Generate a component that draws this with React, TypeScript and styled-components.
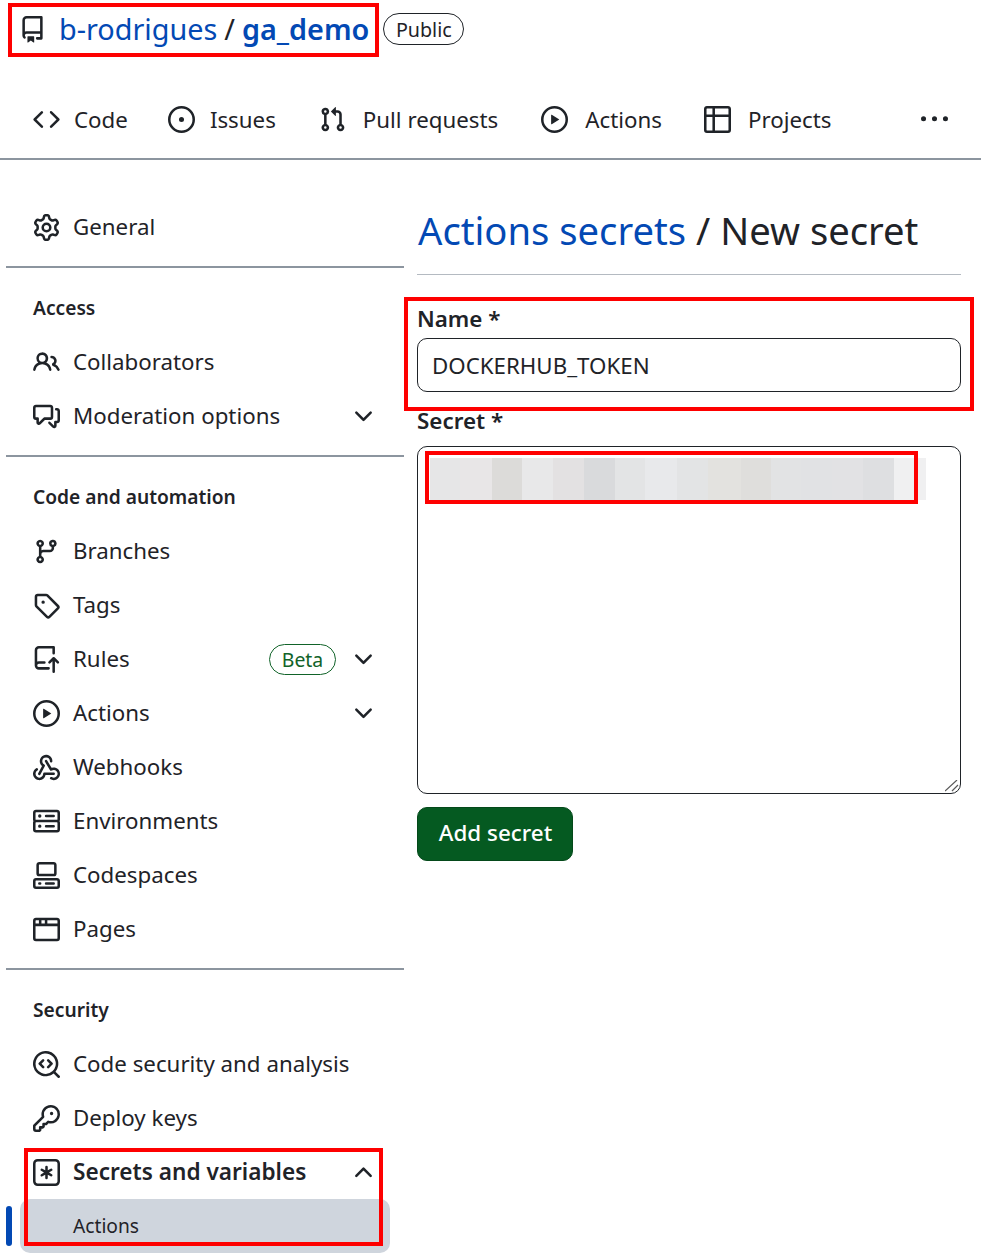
import { ReactNode } from 'react';
import styled, { createGlobalStyle } from 'styled-components';

const GlobalStyle = createGlobalStyle`
  html, body {
    margin: 0;
    background: #fff;
    color: #1f2328;
    font-family: "Noto Sans", "Liberation Sans", sans-serif;
  }
`;

const Page = styled.div`
  position: relative;
  width: 981px;
  height: 1257px;
  overflow: hidden;
`;

// red annotation rectangles drawn on top of the screenshot
const Mark = styled.div<{ $left: number; $top: number; $width: number; $height: number }>`
  position: absolute;
  left: ${(p) => p.$left}px;
  top: ${(p) => p.$top}px;
  width: ${(p) => p.$width}px;
  height: ${(p) => p.$height}px;
  box-sizing: border-box;
  border: 4px solid #fe0000;
  pointer-events: none;
`;

const TitleRow = styled.div`
  display: flex;
  align-items: center;
  height: 58px;
  padding-left: 19px;
  font-size: 28.8px;
  svg {
    flex: none;
  }
`;

const RepoPath = styled.div`
  margin: 0 0 2px 13px;
  white-space: nowrap;
  word-spacing: -0.5px;
`;

const RepoLink = styled.a<{ $bold?: boolean }>`
  color: #0349b4;
  font-weight: ${(p) => (p.$bold ? 600 : 400)};
`;

const Pill = styled.span`
  display: inline-flex;
  align-items: center;
  justify-content: center;
  box-sizing: border-box;
  border: 1px solid #1f2328;
  border-radius: 20px;
  height: 32px;
  width: 81px;
  margin-left: 14px;
  font-size: 19.7px;
`;

const Nav = styled.nav`
  display: flex;
  align-items: center;
  box-sizing: border-box;
  height: 102px;
  padding: 23px 33px 0;
  border-bottom: 2px solid #8c959f;
`;

const NavItem = styled.a<{ $gap: number; $iconGap: number }>`
  display: flex;
  align-items: center;
  gap: ${(p) => p.$iconGap}px;
  margin-right: ${(p) => p.$gap}px;
  font-size: 22.3px;
  line-height: 34px;
`;

const More = styled.span`
  display: flex;
  margin-left: auto;
`;

const Layout = styled.div`
  display: grid;
  grid-template-columns: 398px 544px;
  column-gap: 13px;
  padding-left: 6px;
`;

const Sidebar = styled.aside`
  padding-top: 40px;
`;

const Divider = styled.hr`
  height: 2px;
  margin: 12px 0 0;
  border: 0;
  background: #8c959f;
`;

const GroupHeading = styled.h3`
  margin: 0;
  padding: 23px 27px 10px;
  font-size: 19.2px;
  line-height: 34px;
  font-weight: 600;
`;

const SideRow = styled.a<{ $active?: boolean }>`
  display: flex;
  align-items: center;
  gap: 13px;
  height: 54px;
  padding: 0 27px;
  font-size: ${(p) => (p.$active ? 22.6 : 22.3)}px;
  font-weight: ${(p) => (p.$active ? 600 : 400)};
  white-space: nowrap;
`;

const RowLabel = styled.span`
  margin-bottom: 2px;
`;

const RowTail = styled.span`
  display: flex;
  align-items: center;
  margin-left: auto;
  gap: 14px;
`;

const BetaBadge = styled.span`
  display: inline-flex;
  align-items: center;
  justify-content: center;
  box-sizing: border-box;
  width: 67px;
  height: 31px;
  border: 1px solid #116329;
  border-radius: 20px;
  color: #116329;
  font-size: 19.4px;
`;

const SubRow = styled.div`
  position: relative;
  display: flex;
  align-items: center;
  box-sizing: border-box;
  height: 54px;
  margin: 0 14px 0 14px;
  padding: 0 0 2px 53px;
  border-radius: 10px;
  background: #cfd5dd;
  font-size: 19.2px;
  &::before {
    content: '';
    position: absolute;
    left: -14px;
    top: 7px;
    width: 6px;
    height: 40px;
    border-radius: 4px;
    background: #0349b4;
  }
`;

const Main = styled.main`
  padding-top: 28px;
`;

const Heading = styled.h1`
  margin: 0;
  height: 87px;
  box-sizing: border-box;
  padding-left: 1px;
  border-bottom: 1px solid #b4bac1;
  font-size: 38.2px;
  line-height: 84px;
  font-weight: 400;
  white-space: nowrap;
`;

const HeadingLink = styled.a`
  color: #0349b4;
`;

const Label = styled.label<{ $top: number }>`
  display: block;
  margin-top: ${(p) => p.$top}px;
  font-size: 22.4px;
  line-height: 34px;
  font-weight: 600;
`;

const NameInput = styled.input`
  display: block;
  box-sizing: border-box;
  width: 100%;
  height: 54px;
  margin-top: 2px;
  padding: 0 14px;
  border: 1px solid #1f2328;
  border-radius: 10px;
  background: #fff;
  color: #1f2328;
  font: 22.3px "Noto Sans", sans-serif;
  outline: none;
`;

const SecretBox = styled.div`
  position: relative;
  margin-top: 8px;
`;

const SecretArea = styled.textarea`
  display: block;
  box-sizing: border-box;
  width: 100%;
  height: 348px;
  padding: 10px 14px;
  border: 1px solid #1f2328;
  border-radius: 10px;
  background: #fff;
  font: 22.3px "Noto Sans", sans-serif;
  outline: none;
  resize: none;
`;

const BlurStrip = styled.div`
  position: absolute;
  left: 13px;
  top: 12px;
  width: 496px;
  height: 42px;
  display: flex;
`;

const BlurCell = styled.span<{ $grow: number; $color: string }>`
  flex: ${(p) => p.$grow} 0 0;
  background: ${(p) => p.$color};
`;

const Grip = styled.svg`
  position: absolute;
  right: 2px;
  bottom: 2px;
`;

const SubmitButton = styled.button`
  display: flex;
  align-items: center;
  justify-content: center;
  box-sizing: border-box;
  width: 156px;
  height: 54px;
  margin-top: 13px;
  padding: 0 0 3px 1px;
  border: 1px solid #04491a;
  border-radius: 10px;
  background: #055a21;
  color: #fff;
  font: 500 22.4px "Noto Sans", sans-serif;
`;

const ICON = 27;

// octicons, 16px grid: the reference shows these rather than the 24px set
const paths = {
  repo: 'M2 2.5A2.5 2.5 0 0 1 4.5 0h8.75a.75.75 0 0 1 .75.75v12.5a.75.75 0 0 1-.75.75h-2.5a.75.75 0 0 1 0-1.5h1.75v-2h-8a1 1 0 0 0-.714 1.7.75.75 0 1 1-1.072 1.05A2.495 2.495 0 0 1 2 11.5Zm10.5-1h-8a1 1 0 0 0-1 1v6.708A2.486 2.486 0 0 1 4.5 9h8ZM5 12.25a.25.25 0 0 1 .25-.25h3.5a.25.25 0 0 1 .25.25v3.25a.25.25 0 0 1-.4.2l-1.45-1.087a.249.249 0 0 0-.3 0L5.4 15.7a.25.25 0 0 1-.4-.2Z',
  code: 'm11.28 3.22 4.25 4.25a.75.75 0 0 1 0 1.06l-4.25 4.25a.749.749 0 0 1-1.275-.326.749.749 0 0 1 .215-.734L13.94 8l-3.72-3.72a.749.749 0 0 1 .326-1.275.749.749 0 0 1 .734.215Zm-6.56 0a.751.751 0 0 1 1.042.018.751.751 0 0 1 .018 1.042L2.06 8l3.72 3.72a.749.749 0 0 1-.326 1.275.749.749 0 0 1-.734-.215L.47 8.53a.75.75 0 0 1 0-1.06Z',
  issue: 'M8 9.5a1.5 1.5 0 1 0 0-3 1.5 1.5 0 0 0 0 3ZM8 0a8 8 0 1 1 0 16A8 8 0 0 1 8 0ZM1.5 8a6.5 6.5 0 1 0 13 0 6.5 6.5 0 0 0-13 0Z',
  pull: 'M1.5 3.25a2.25 2.25 0 1 1 3 2.122v5.256a2.251 2.251 0 1 1-1.5 0V5.372A2.25 2.25 0 0 1 1.5 3.25Zm5.677-.177L9.573.677A.25.25 0 0 1 10 .854V2.5h1A2.5 2.5 0 0 1 13.5 5v5.628a2.251 2.251 0 1 1-1.5 0V5a1 1 0 0 0-1-1h-1v1.646a.25.25 0 0 1-.427.177L7.177 3.427a.25.25 0 0 1 0-.354ZM3.75 2.5a.75.75 0 1 0 0 1.5.75.75 0 0 0 0-1.5Zm0 9.5a.75.75 0 1 0 0 1.5.75.75 0 0 0 0-1.5Zm8.25.75a.75.75 0 1 0 1.5 0 .75.75 0 0 0-1.5 0Z',
  play: 'M8 0a8 8 0 1 1 0 16A8 8 0 0 1 8 0ZM1.5 8a6.5 6.5 0 1 0 13 0 6.5 6.5 0 0 0-13 0Zm4.879-2.773 4.264 2.559a.25.25 0 0 1 0 .428l-4.264 2.559A.25.25 0 0 1 6 10.559V5.442a.25.25 0 0 1 .379-.215Z',
  table: 'M0 1.75C0 .784.784 0 1.75 0h12.5C15.216 0 16 .784 16 1.75v12.5A1.75 1.75 0 0 1 14.25 16H1.75A1.75 1.75 0 0 1 0 14.25ZM6.5 6.5v8h7.75a.25.25 0 0 0 .25-.25V6.5Zm8-1.5V1.75a.25.25 0 0 0-.25-.25H6.5V5Zm-13 1.5v7.75c0 .138.112.25.25.25H5v-8ZM5 5V1.5H1.75a.25.25 0 0 0-.25.25V5Z',
  kebab: 'M8 9a1.5 1.5 0 1 0 0-3 1.5 1.5 0 0 0 0 3ZM1.5 9a1.5 1.5 0 1 0 0-3 1.5 1.5 0 0 0 0 3Zm13 0a1.5 1.5 0 1 0 0-3 1.5 1.5 0 0 0 0 3Z',
  gear: 'M8 0a8.2 8.2 0 0 1 .701.031C9.444.095 9.99.645 10.16 1.29l.288 1.107c.018.066.079.158.212.224.231.114.454.243.668.386.123.082.233.09.299.071l1.103-.303c.644-.176 1.392.021 1.82.63.27.385.506.792.704 1.218.315.675.111 1.422-.364 1.891l-.814.806c-.049.048-.098.147-.088.294.016.257.016.515 0 .772-.01.147.038.246.088.294l.814.806c.475.469.679 1.216.364 1.891a7.977 7.977 0 0 1-.704 1.217c-.428.61-1.176.807-1.82.63l-1.102-.302c-.067-.019-.177-.011-.3.071a5.909 5.909 0 0 1-.668.386c-.133.066-.194.158-.211.224l-.29 1.106c-.168.646-.715 1.196-1.458 1.26a8.006 8.006 0 0 1-1.402 0c-.743-.064-1.289-.614-1.458-1.26l-.289-1.106c-.018-.066-.079-.158-.212-.224a5.738 5.738 0 0 1-.668-.386c-.123-.082-.233-.09-.299-.071l-1.103.303c-.644.176-1.392-.021-1.82-.63a8.12 8.12 0 0 1-.704-1.218c-.315-.675-.111-1.422.363-1.891l.815-.806c.05-.048.098-.147.088-.294a6.214 6.214 0 0 1 0-.772c.01-.147-.038-.246-.088-.294l-.815-.806C.635 6.045.431 5.298.746 4.623a7.92 7.92 0 0 1 .704-1.217c.428-.61 1.176-.807 1.82-.63l1.102.302c.067.019.177.011.3-.071.214-.143.437-.272.668-.386.133-.066.194-.158.211-.224l.29-1.106C6.009.645 6.556.095 7.299.03 7.53.01 7.764 0 8 0Zm-.571 1.525c-.036.003-.108.036-.137.146l-.289 1.105c-.147.561-.549.967-.998 1.189-.173.086-.34.183-.5.29-.417.278-.97.423-1.529.27l-1.103-.303c-.109-.03-.175.016-.195.045-.22.312-.412.644-.573.99-.014.031-.021.11.059.19l.815.806c.411.406.562.957.53 1.456a4.709 4.709 0 0 0 0 .582c.032.499-.119 1.05-.53 1.456l-.815.806c-.081.08-.073.159-.059.19.162.346.353.677.573.989.02.03.085.076.195.046l1.102-.303c.56-.153 1.113-.008 1.53.27.161.107.328.204.501.29.447.222.85.629.997 1.189l.289 1.105c.029.109.101.143.137.146a6.6 6.6 0 0 0 1.142 0c.036-.003.108-.036.137-.146l.289-1.105c.147-.561.549-.967.998-1.189.173-.086.34-.183.5-.29.417-.278.97-.423 1.529-.27l1.103.303c.109.029.175-.016.195-.045.22-.313.411-.644.573-.99.014-.031.021-.11-.059-.19l-.815-.806c-.411-.406-.562-.957-.53-1.456a4.709 4.709 0 0 0 0-.582c-.032-.499.119-1.05.53-1.456l.815-.806c.081-.08.073-.159.059-.19a6.464 6.464 0 0 0-.573-.989c-.02-.03-.085-.076-.195-.046l-1.102.303c-.56.153-1.113.008-1.53-.27a4.44 4.44 0 0 0-.501-.29c-.447-.222-.85-.629-.997-1.189l-.289-1.105c-.029-.11-.101-.143-.137-.146a6.6 6.6 0 0 0-1.142 0ZM11 8a3 3 0 1 1-6 0 3 3 0 0 1 6 0ZM9.5 8a1.5 1.5 0 1 0-3.001.001A1.5 1.5 0 0 0 9.5 8Z',
  people: 'M2 5.5a3.5 3.5 0 1 1 5.898 2.549 5.508 5.508 0 0 1 3.034 4.084.75.75 0 1 1-1.482.235 4 4 0 0 0-7.9 0 .75.75 0 0 1-1.482-.236A5.507 5.507 0 0 1 3.102 8.05 3.493 3.493 0 0 1 2 5.5ZM11 4a3.001 3.001 0 0 1 2.22 5.018 5.01 5.01 0 0 1 2.56 3.012.749.749 0 0 1-.885.954.752.752 0 0 1-.549-.514 3.507 3.507 0 0 0-2.522-2.372.75.75 0 0 1-.574-.73v-.352a.75.75 0 0 1 .416-.672A1.5 1.5 0 0 0 11 5.5.75.75 0 0 1 11 4Zm-5.5-.5a2 2 0 1 0-.001 3.999A2 2 0 0 0 5.5 3.5Z',
  discussion: 'M1.75 1h8.5c.966 0 1.75.784 1.75 1.75v5.5A1.75 1.75 0 0 1 10.25 10H7.061l-2.574 2.573A1.458 1.458 0 0 1 2 11.543V10h-.25A1.75 1.75 0 0 1 0 8.25v-5.5C0 1.784.784 1 1.75 1ZM1.5 2.75v5.5c0 .138.112.25.25.25h1a.75.75 0 0 1 .75.75v2.19l2.72-2.72a.749.749 0 0 1 .53-.22h3.5a.25.25 0 0 0 .25-.25v-5.5a.25.25 0 0 0-.25-.25h-8.5a.25.25 0 0 0-.25.25Zm13 2a.25.25 0 0 0-.25-.25h-.5a.75.75 0 0 1 0-1.5h.5c.966 0 1.75.784 1.75 1.75v5.5A1.75 1.75 0 0 1 14.25 12H14v1.543a1.458 1.458 0 0 1-2.487 1.03L9.22 12.28a.749.749 0 0 1 .326-1.275.749.749 0 0 1 .734.215l2.22 2.22v-2.19a.75.75 0 0 1 .75-.75h1a.25.25 0 0 0 .25-.25Z',
  branch: 'M9.5 3.25a2.25 2.25 0 1 1 3 2.122V6A2.5 2.5 0 0 1 10 8.5H6a1 1 0 0 0-1 1v1.128a2.251 2.251 0 1 1-1.5 0V5.372a2.25 2.25 0 1 1 1.5 0v1.836A2.493 2.493 0 0 1 6 7h4a1 1 0 0 0 1-1v-.628A2.25 2.25 0 0 1 9.5 3.25Zm-6 0a.75.75 0 1 0 1.5 0 .75.75 0 0 0-1.5 0Zm8.25-.75a.75.75 0 1 0 0 1.5.75.75 0 0 0 0-1.5ZM4.25 12a.75.75 0 1 0 0 1.5.75.75 0 0 0 0-1.5Z',
  tag: 'M1 7.775V2.75C1 1.784 1.784 1 2.75 1h5.025c.464 0 .91.184 1.238.513l6.25 6.25a1.75 1.75 0 0 1 0 2.474l-5.026 5.026a1.75 1.75 0 0 1-2.474 0l-6.25-6.25A1.752 1.752 0 0 1 1 7.775Zm1.5 0c0 .066.026.13.073.177l6.25 6.25a.25.25 0 0 0 .354 0l5.025-5.025a.25.25 0 0 0 0-.354l-6.25-6.25a.25.25 0 0 0-.177-.073H2.75a.25.25 0 0 0-.25.25ZM6 5a1 1 0 1 1 0 2 1 1 0 0 1 0-2Z',
  repoPush: 'M1 2.5A2.5 2.5 0 0 1 3.5 0h8.75a.75.75 0 0 1 .75.75v3.5a.75.75 0 0 1-1.5 0V1.5h-8a1 1 0 0 0-1 1v6.708A2.492 2.492 0 0 1 3.5 9h3.25a.75.75 0 0 1 0 1.5H3.5a1 1 0 0 0 0 2h5.75a.75.75 0 0 1 0 1.5H3.5A2.5 2.5 0 0 1 1 11.5Zm13.23 7.79h-.001l-1.224-1.224v6.184a.75.75 0 0 1-1.5 0V9.066L10.28 10.29a.75.75 0 0 1-1.06-1.061l2.505-2.504a.75.75 0 0 1 1.06 0L15.29 9.23a.751.751 0 0 1-.018 1.042.751.751 0 0 1-1.042.018Z',
  webhook: 'M5.5 4.25a2.25 2.25 0 0 1 4.5 0 .75.75 0 0 0 1.5 0 3.75 3.75 0 1 0-6.14 2.889l-2.272 4.258a.75.75 0 0 0 1.324.706L7 7.25a.75.75 0 0 0-.309-1.015A2.25 2.25 0 0 1 5.5 4.25ZM7.364 3.607a.75.75 0 0 1 1.03.257l2.608 4.349a3.75 3.75 0 1 1-.628 6.785.75.75 0 0 1 .752-1.299 2.25 2.25 0 1 0-.033-3.88.75.75 0 0 1-1.03-.256L7.107 4.636a.75.75 0 0 1 .257-1.03ZM2.9 8.776A.75.75 0 0 1 2.625 9.8 2.25 2.25 0 1 0 6 11.75a.75.75 0 0 1 .75-.751h5.5a.75.75 0 0 1 0 1.5H7.425a3.751 3.751 0 1 1-5.55-3.998.75.75 0 0 1 1.024.274Z',
  server: 'M1.75 1h12.5c.966 0 1.75.784 1.75 1.75v4c0 .372-.116.717-.314 1 .198.283.314.628.314 1v4a1.75 1.75 0 0 1-1.75 1.75H1.75A1.75 1.75 0 0 1 0 12.75v-4c0-.358.109-.707.314-1a1.739 1.739 0 0 1-.314-1v-4C0 1.784.784 1 1.75 1ZM1.5 2.75v4c0 .138.112.25.25.25h12.5a.25.25 0 0 0 .25-.25v-4a.25.25 0 0 0-.25-.25H1.75a.25.25 0 0 0-.25.25Zm.25 5.75a.25.25 0 0 0-.25.25v4c0 .138.112.25.25.25h12.5a.25.25 0 0 0 .25-.25v-4a.25.25 0 0 0-.25-.25ZM7 4.75A.75.75 0 0 1 7.75 4h4.5a.75.75 0 0 1 0 1.5h-4.5A.75.75 0 0 1 7 4.75ZM7.75 10h4.5a.75.75 0 0 1 0 1.5h-4.5a.75.75 0 0 1 0-1.5ZM3 4.75a1 1 0 1 1 2 0 1 1 0 0 1-2 0Zm1 5a1 1 0 1 1 0 2 1 1 0 0 1 0-2Z',
  codespaces: 'M0 11.25c0-.966.784-1.75 1.75-1.75h12.5c.966 0 1.75.784 1.75 1.75v3A1.75 1.75 0 0 1 14.25 16H1.75A1.75 1.75 0 0 1 0 14.25Zm2-9.5C2 .784 2.784 0 3.75 0h8.5C13.216 0 14 .784 14 1.75v5a1.75 1.75 0 0 1-1.75 1.75h-8.5A1.75 1.75 0 0 1 2 6.75Zm1.75-.25a.25.25 0 0 0-.25.25v5c0 .138.112.25.25.25h8.5a.25.25 0 0 0 .25-.25v-5a.25.25 0 0 0-.25-.25Zm-2 9.5a.25.25 0 0 0-.25.25v3c0 .138.112.25.25.25h12.5a.25.25 0 0 0 .25-.25v-3a.25.25 0 0 0-.25-.25ZM7 12.75a.75.75 0 0 1 .75-.75h4.5a.75.75 0 0 1 0 1.5h-4.5a.75.75 0 0 1-.75-.75Zm-4 0a.75.75 0 0 1 .75-.75h.5a.75.75 0 0 1 0 1.5h-.5a.75.75 0 0 1-.75-.75Z',
  browser: 'M0 2.75C0 1.784.784 1 1.75 1h12.5c.966 0 1.75.784 1.75 1.75v10.5A1.75 1.75 0 0 1 14.25 15H1.75A1.75 1.75 0 0 1 0 13.25ZM14.5 6h-13v7.25c0 .138.112.25.25.25h12.5a.25.25 0 0 0 .25-.25Zm-6-3.5v2h6V2.75a.25.25 0 0 0-.25-.25ZM5 2.5v2h2v-2Zm-3.25 0a.25.25 0 0 0-.25.25V4.5h2v-2Z',
  codescan: 'M8.47 4.97a.75.75 0 0 0 0 1.06L9.94 7.5 8.47 8.97a.75.75 0 1 0 1.06 1.06l2-2a.75.75 0 0 0 0-1.06l-2-2a.75.75 0 0 0-1.06 0ZM6.53 6.03a.75.75 0 0 0-1.06-1.06l-2 2a.75.75 0 0 0 0 1.06l2 2a.75.75 0 1 0 1.06-1.06L5.06 7.5l1.47-1.47ZM12.246 13.307a7.501 7.501 0 1 1 1.06-1.06l2.474 2.473a.749.749 0 0 1-.326 1.275.749.749 0 0 1-.734-.215ZM1.5 7.5a6.002 6.002 0 0 0 3.608 5.504 6.002 6.002 0 0 0 6.486-1.117.75.75 0 0 1 .292-.293A6 6 0 1 0 1.5 7.5Z',
  key: 'M10.5 0a5.499 5.499 0 1 1-1.288 10.848l-.932.932a.749.749 0 0 1-.53.22H7v.75a.749.749 0 0 1-.22.53l-.5.5a.749.749 0 0 1-.53.22H5v.75a.749.749 0 0 1-.22.53l-.5.5a.749.749 0 0 1-.53.22h-2A1.75 1.75 0 0 1 0 14.25v-2c0-.199.079-.389.22-.53l4.932-4.932A5.5 5.5 0 0 1 10.5 0Zm-4 5.5c-.001.431.069.86.205 1.269a.75.75 0 0 1-.181.768L1.5 12.56v1.69c0 .138.112.25.25.25h1.69l.06-.06v-1.19a.75.75 0 0 1 .75-.75h1.19l.06-.06v-1.19a.75.75 0 0 1 .75-.75h1.19l1.023-1.025a.75.75 0 0 1 .768-.18A4 4 0 1 0 6.5 5.5ZM11 6a1 1 0 1 1 0-2 1 1 0 0 1 0 2Z',
  keyAsterisk: 'M0 2.75A2.75 2.75 0 0 1 2.75 0h10.5A2.75 2.75 0 0 1 16 2.75v10.5A2.75 2.75 0 0 1 13.25 16H2.75A2.75 2.75 0 0 1 0 13.25ZM2.75 1.5c-.69 0-1.25.56-1.25 1.25v10.5c0 .69.56 1.25 1.25 1.25h10.5c.69 0 1.25-.56 1.25-1.25V2.75c0-.69-.56-1.25-1.25-1.25ZM8 4a.75.75 0 0 1 .75.75V6.7l1.69-.975a.75.75 0 0 1 .75 1.3L9.5 8l1.69.975a.75.75 0 0 1-.75 1.3L8.75 9.3v1.95a.75.75 0 0 1-1.5 0V9.3l-1.69.976a.75.75 0 0 1-.75-1.3L6.5 8l-1.69-.975a.75.75 0 0 1 .75-1.3l1.69.976V4.75A.75.75 0 0 1 8 4Z',
  chevronDown: 'M12.78 5.22a.749.749 0 0 1 0 1.06l-4.25 4.25a.749.749 0 0 1-1.06 0L3.22 6.28a.749.749 0 1 1 1.06-1.06L8 8.939l3.72-3.719a.749.749 0 0 1 1.06 0Z',
  chevronUp: 'M3.22 10.53a.749.749 0 0 1 0-1.06l4.25-4.25a.749.749 0 0 1 1.06 0l4.25 4.25a.749.749 0 1 1-1.06 1.06L8 6.811 4.28 10.53a.749.749 0 0 1-1.06 0Z',
};

const IconSvg = styled.svg`
  flex: none;
`;

function Octicon({ name }: { name: keyof typeof paths }) {
  return (
    <IconSvg width={ICON} height={ICON} viewBox="0 0 16 16" fill="currentColor">
      <path d={paths[name]} />
    </IconSvg>
  );
}

const navItems: { icon: keyof typeof paths; label: string; gap: number; iconGap: number }[] = [
  { icon: 'code', label: 'Code', gap: 40, iconGap: 14 },
  { icon: 'issue', label: 'Issues', gap: 43, iconGap: 15 },
  { icon: 'pull', label: 'Pull requests', gap: 43, iconGap: 17 },
  { icon: 'play', label: 'Actions', gap: 42, iconGap: 17 },
  { icon: 'table', label: 'Projects', gap: 0, iconGap: 17 },
];

const blur: [number, string][] = [
  [30, '#e6e6e7'],
  [32, '#e8e6e7'],
  [30, '#dcdbd9'],
  [31, '#e8e8e9'],
  [32, '#e3e1e2'],
  [31, '#d9dadc'],
  [30, '#e3e4e5'],
  [32, '#e8e9eb'],
  [31, '#e3e4e5'],
  [33, '#e3e2df'],
  [30, '#dfdedc'],
  [30, '#e2e3e4'],
  [32, '#e1e2e4'],
  [31, '#e2e2e4'],
  [31, '#dedfe1'],
  [32, '#f0f0f1'],
];

function Row({ icon, label, tail, active }: { icon: keyof typeof paths; label: string; tail?: ReactNode; active?: boolean }) {
  return (
    <SideRow $active={active}>
      <Octicon name={icon} />
      <RowLabel>{label}</RowLabel>
      {tail && <RowTail>{tail}</RowTail>}
    </SideRow>
  );
}

const down = <Octicon name="chevronDown" />;

export default function App() {
  return (
    <Page>
      <GlobalStyle />
      <TitleRow>
        <Octicon name="repo" />
        <RepoPath>
          <RepoLink>b-rodrigues</RepoLink> / <RepoLink $bold>ga_demo</RepoLink>
        </RepoPath>
        <Pill>Public</Pill>
      </TitleRow>

      <Nav>
        {navItems.map((item) => (
          <NavItem key={item.label} $gap={item.gap} $iconGap={item.iconGap}>
            <Octicon name={item.icon} />
            {item.label}
          </NavItem>
        ))}
        <More>
          <Octicon name="kebab" />
        </More>
      </Nav>

      <Layout>
        <Sidebar>
          <Row icon="gear" label="General" />
          <Divider />
          <GroupHeading>Access</GroupHeading>
          <Row icon="people" label="Collaborators" />
          <Row icon="discussion" label="Moderation options" tail={down} />
          <Divider />
          <GroupHeading>Code and automation</GroupHeading>
          <Row icon="branch" label="Branches" />
          <Row icon="tag" label="Tags" />
          <Row
            icon="repoPush"
            label="Rules"
            tail={
              <>
                <BetaBadge>Beta</BetaBadge>
                {down}
              </>
            }
          />
          <Row icon="play" label="Actions" tail={down} />
          <Row icon="webhook" label="Webhooks" />
          <Row icon="server" label="Environments" />
          <Row icon="codespaces" label="Codespaces" />
          <Row icon="browser" label="Pages" />
          <Divider />
          <GroupHeading>Security</GroupHeading>
          <Row icon="codescan" label="Code security and analysis" />
          <Row icon="key" label="Deploy keys" />
          <Row active icon="keyAsterisk" label="Secrets and variables" tail={<Octicon name="chevronUp" />} />
          <SubRow>Actions</SubRow>
        </Sidebar>

        <Main>
          <Heading>
            <HeadingLink>Actions secrets</HeadingLink> / New secret
          </Heading>
          <Label $top={27}>Name *</Label>
          <NameInput readOnly value="DOCKERHUB_TOKEN" />
          <Label $top={12}>Secret *</Label>
          <SecretBox>
            <SecretArea readOnly />
            <BlurStrip>
              {blur.map(([grow, color], i) => (
                <BlurCell key={i} $grow={grow} $color={color} />
              ))}
            </BlurStrip>
            <Grip width="14" height="12" viewBox="0 0 14 12" fill="none" stroke="#5a5a5a" strokeWidth="1.2">
              <path d="M0 11 L12 0 M7 11 L13 5" />
            </Grip>
          </SecretBox>
          <SubmitButton>Add secret</SubmitButton>
        </Main>
      </Layout>

      <Mark $left={8} $top={3} $width={371} $height={54} />
      <Mark $left={404} $top={297} $width={570} $height={114} />
      <Mark $left={425} $top={451} $width={493} $height={53} />
      <Mark $left={24} $top={1148} $width={359} $height={98} />
    </Page>
  );
}
